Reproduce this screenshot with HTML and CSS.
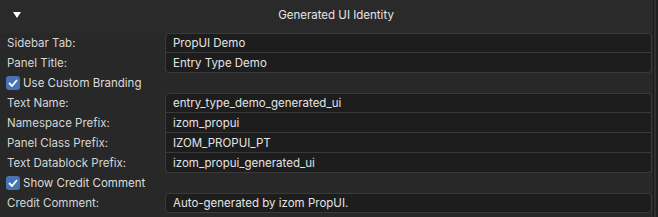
FILE: index.html
```html
<!DOCTYPE html>
<html>
<head>
<meta charset="utf-8">
<link rel="stylesheet" href="styles.css">
</head>
<body>
<div class="region">
  <div class="panel">
    <div class="header">
      <svg class="tri" width="8" height="6" viewBox="0 0 8 6"><path d="M0 0 H8 L4 6 Z" fill="#ffffff"/></svg>
      <span class="title">Generated UI Identity</span>
    </div>
    <div class="body">
      <div class="group">
        <div class="row"><span class="label">Sidebar Tab:</span><span class="field">PropUI Demo</span></div>
        <div class="row"><span class="label">Panel Title:</span><span class="field">Entry Type Demo</span></div>
      </div>
      <div class="row check"><span class="box"><svg width="10" height="8" viewBox="0 0 10 8"><path d="M1 4 L4 7 L9 1" fill="none" stroke="#fff" stroke-width="1.8"/></svg></span><span class="clabel">Use Custom Branding</span></div>
      <div class="group">
        <div class="row"><span class="label">Text Name:</span><span class="field">entry_type_demo_generated_ui</span></div>
        <div class="row"><span class="label">Namespace Prefix:</span><span class="field">izom_propui</span></div>
        <div class="row"><span class="label">Panel Class Prefix:</span><span class="field">IZOM_PROPUI_PT</span></div>
        <div class="row"><span class="label">Text Datablock Prefix:</span><span class="field">izom_propui_generated_ui</span></div>
      </div>
      <div class="row check"><span class="box"><svg width="10" height="8" viewBox="0 0 10 8"><path d="M1 4 L4 7 L9 1" fill="none" stroke="#fff" stroke-width="1.8"/></svg></span><span class="clabel">Show Credit Comment</span></div>
      <div class="group">
        <div class="row"><span class="label">Credit Comment:</span><span class="field">Auto-generated by izom PropUI.</span></div>
      </div>
    </div>
  </div>
  <div class="edge"></div>
</div>
</body>
</html>
```
FILE: styles.css
```css
html, body {
  margin: 0;
  padding: 0;
  background: #282828;
  width: 658px;
  height: 217px;
  overflow: hidden;
  font-family: Inter, "DejaVu Sans", sans-serif;
  font-size: 11.5px;
  color: #dcdcdc;
}
.region {
  display: flex;
  height: 217px;
}
.panel {
  width: 654px;
  background: #282828;
}
.edge {
  width: 4px;
  background: #1f1f1f;
  border-left: 1px solid #1a1a1a;
  box-shadow: inset 2px 0 0 #303030;
}
.header {
  height: 29px;
  padding-bottom: 4px;
  display: flex;
  align-items: center;
  background: #2a2a2a;
}
.tri {
  margin-left: 13px;
}
.title {
  flex: 1;
  text-align: center;
  margin-left: -4px;
  padding-left: 2px;
  color: #e6e6e6;
}
.body {
  display: flex;
  flex-direction: column;
}
.group {
  display: flex;
  flex-direction: column;
}
.row {
  height: 20px;
  display: flex;
  align-items: stretch;
}
.label {
  width: 158px;
  padding-left: 7px;
  display: flex;
  align-items: center;
  color: #d6d6d6;
}
.field {
  width: 478px;
  background: #1d1d1d;
  border: 1px solid #3a3a3a;
  border-top: none;
  padding-left: 7px;
  display: flex;
  align-items: center;
  color: #e4e4e4;
  height: 19px;
}
.group .row:first-child .field {
  border-top: 1px solid #3a3a3a;
  border-top-left-radius: 4px;
  border-top-right-radius: 4px;
  height: 18px;
}
.group .row:last-child .field {
  border-bottom-left-radius: 4px;
  border-bottom-right-radius: 4px;
}
.check {
  align-items: center;
}
.box {
  width: 14px;
  height: 14px;
  margin-left: 6px;
  background: #4772b3;
  border-radius: 3px;
  display: flex;
  align-items: center;
  justify-content: center;
}
.clabel {
  margin-left: 3px;
  color: #dcdcdc;
}
```
